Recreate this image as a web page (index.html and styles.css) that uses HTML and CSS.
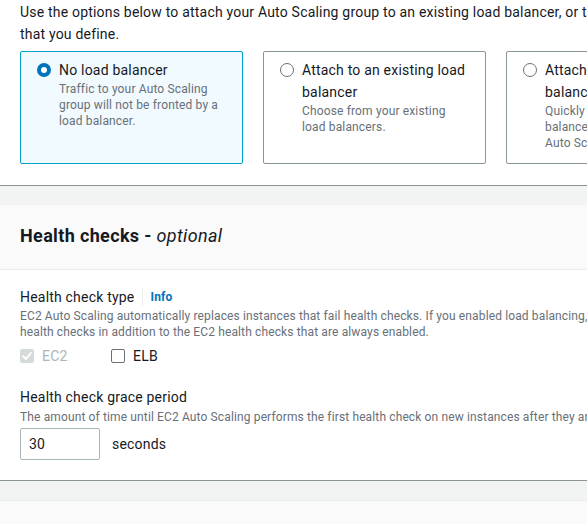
FILE: index.html
```html
<!DOCTYPE html>
<html lang="en">
<head>
<meta charset="utf-8">
<title>Load balancing and health checks</title>
<link rel="stylesheet" href="styles.css">
</head>
<body>
<div class="page">
  <section class="panel panel-lb">
    <p class="intro">Use the options below to attach your Auto Scaling group to an existing load balancer, or to a new load balancer that you define.</p>
    <div class="cards">
      <label class="card card-selected">
        <span class="radio radio-on"></span>
        <span class="card-text">
          <span class="card-title">No load balancer</span>
          <span class="card-desc">Traffic to your Auto Scaling group will not be fronted by a load balancer.</span>
        </span>
      </label>
      <label class="card">
        <span class="radio"></span>
        <span class="card-text">
          <span class="card-title">Attach to an existing load balancer</span>
          <span class="card-desc">Choose from your existing load balancers.</span>
        </span>
      </label>
      <label class="card">
        <span class="radio"></span>
        <span class="card-text">
          <span class="card-title">Attach to a new load balancer</span>
          <span class="card-desc">Quickly create a basic load balancer to attach to your Auto Scaling group.</span>
        </span>
      </label>
    </div>
  </section>

  <div class="gap"></div>

  <section class="panel">
    <header class="panel-header">
      <h2>Health checks - <i>optional</i></h2>
    </header>
    <div class="panel-body">
      <div class="field">
        <div class="label-row">
          <span class="label">Health check type</span>
          <a class="info">Info</a>
        </div>
        <p class="desc">EC2 Auto Scaling automatically replaces instances that fail health checks. If you enabled load balancing, you can enable ELB health checks in addition to the EC2 health checks that are always enabled.</p>
        <div class="checks">
          <span class="check check-disabled">
            <span class="box box-disabled">
              <svg viewBox="0 0 14 14" width="14" height="14"><path d="M3.2 7.2 L6 10 L10.8 4" fill="none" stroke="#ffffff" stroke-width="2" stroke-linecap="round" stroke-linejoin="round"/></svg>
            </span>
            <span class="check-label">EC2</span>
          </span>
          <span class="check">
            <span class="box"></span>
            <span class="check-label">ELB</span>
          </span>
        </div>
      </div>
      <div class="field field-grace">
        <div class="label-row">
          <span class="label">Health check grace period</span>
        </div>
        <p class="desc">The amount of time until EC2 Auto Scaling performs the first health check on new instances after they are put into service.</p>
        <div class="input-row">
          <span class="input">30</span>
          <span class="unit">seconds</span>
        </div>
      </div>
    </div>
  </section>

  <div class="gap"></div>

  <section class="panel">
    <header class="panel-header panel-header-next"></header>
  </section>
</div>
</body>
</html>
```
FILE: styles.css
```css
html, body {
  margin: 0;
  padding: 0;
  background: #f2f3f3;
  overflow: hidden;
}

body {
  font-family: Roboto, "Liberation Sans", sans-serif;
  color: #16191f;
  font-size: 14px;
  line-height: 22px;
  letter-spacing: 0.2px;
}

.page {
  width: 760px;
}

.panel {
  background: #ffffff;
  box-shadow: 0 1px 0 0 #8a9597;
}

.panel-lb {
  padding: 1px 20px 21px 20px;
}

.intro {
  margin: 0 0 6px 0;
}

.cards {
  display: grid;
  grid-template-columns: 223px 223px 223px;
  column-gap: 20px;
}

.card {
  display: flex;
  align-items: flex-start;
  gap: 8px;
  border: 1px solid #879596;
  border-radius: 2px;
  padding: 7px 16px 12px 16px;
  background: #ffffff;
}

.card-selected {
  border-color: #00a1c9;
  background: #f1faff;
}

.radio {
  flex: none;
  width: 14px;
  height: 14px;
  box-sizing: border-box;
  border-radius: 50%;
  border: 1px solid #687078;
  background: #ffffff;
  margin-top: 4px;
}

.radio-on {
  border: 4px solid #0073bb;
}

.card-text {
  display: flex;
  flex-direction: column;
}

.card-title {
  font-size: 14px;
  line-height: 22px;
}

.card-desc {
  font-size: 12px;
  line-height: 16px;
  color: #687078;
  letter-spacing: 0.15px;
}

.gap {
  height: 20px;
}

.panel-header {
  background: #fafafa;
  border-bottom: 1px solid #eaeded;
  padding: 20px 20px 22px 20px;
}

.panel-header h2 {
  margin: 0;
  font-size: 18px;
  line-height: 22px;
  font-weight: 700;
  letter-spacing: 0.35px;
}

.panel-header h2 i {
  font-weight: 400;
}

.panel-header-next {
  border-top: 1px solid #eaeded;
  height: 40px;
  padding: 0;
}

.panel-body {
  padding: 16px 20px 20px 20px;
}

.label-row {
  display: flex;
  align-items: center;
}

.label {
  font-size: 14px;
  line-height: 22px;
}

.info {
  font-size: 12px;
  font-weight: 700;
  color: #0073bb;
  line-height: 18px;
  margin-left: 8px;
  padding-left: 7px;
  border-left: 1px solid #eaeded;
}

.desc {
  margin: 0;
  max-width: 700px;
  font-size: 12px;
  line-height: 16px;
  color: #687078;
  letter-spacing: 0.13px;
}

.field-grace .desc {
  margin-top: 1px;
}

.checks {
  display: flex;
  gap: 20px;
  margin-top: 5px;
}

.check {
  display: flex;
  align-items: center;
  gap: 8px;
}

.box {
  width: 14px;
  height: 14px;
  box-sizing: border-box;
  border: 1px solid #687078;
  border-radius: 2px;
  background: #ffffff;
  display: flex;
}

.box-disabled {
  border: none;
  background: #d5dbdb;
}

.check-disabled .check-label {
  color: #aab7b8;
}

.check-label {
  width: 49px;
}

.field-grace {
  margin-top: 19px;
}

.input-row {
  display: flex;
  align-items: center;
  gap: 12px;
  margin-top: 3px;
}

.input {
  width: 80px;
  height: 32px;
  box-sizing: border-box;
  border: 1px solid #aab7b8;
  border-radius: 2px;
  padding: 4px 8px;
  line-height: 22px;
}
```
